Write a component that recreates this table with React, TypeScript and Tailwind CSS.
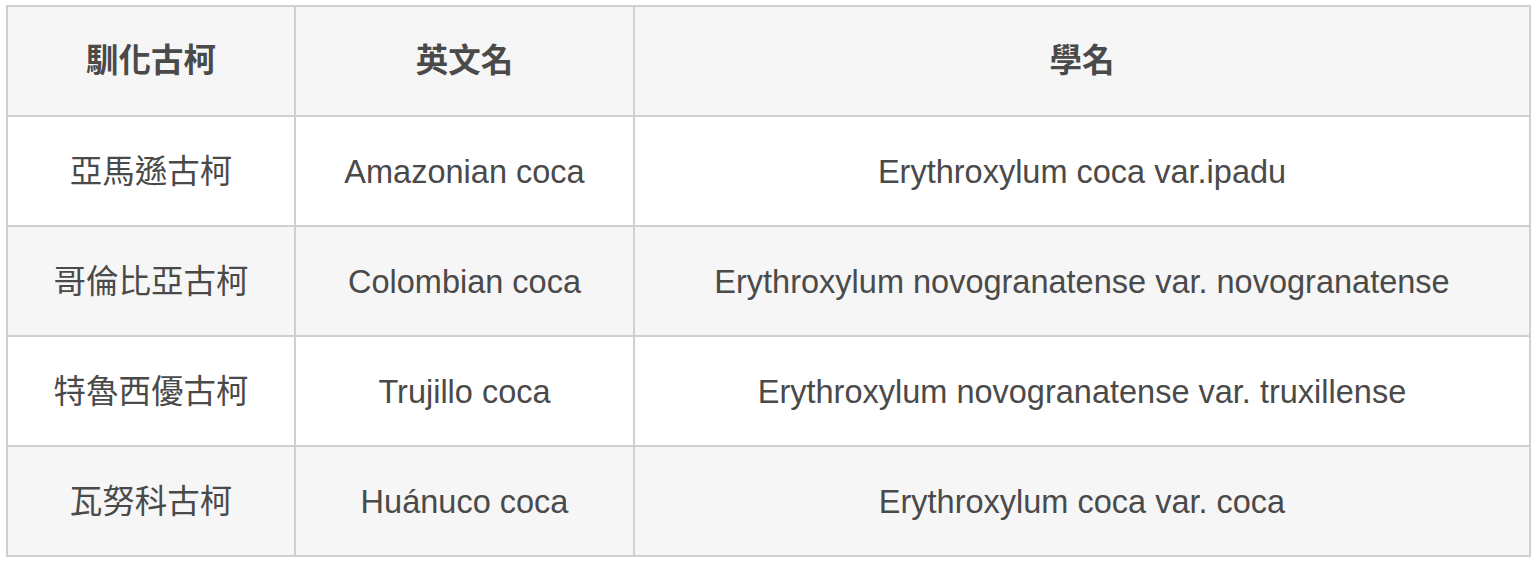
const HEAD = ['馴化古柯', '英文名', '學名']

const ROWS: [string, string, string][] = [
  ['亞馬遜古柯', 'Amazonian coca', 'Erythroxylum coca var.ipadu'],
  ['哥倫比亞古柯', 'Colombian coca', 'Erythroxylum novogranatense var. novogranatense'],
  ['特魯西優古柯', 'Trujillo coca', 'Erythroxylum novogranatense var. truxillense'],
  ['瓦努科古柯', 'Huánuco coca', 'Erythroxylum coca var. coca'],
]

const cell =
  'h-[110px] flex items-center justify-center border-r-2 border-b-2 border-[#d0d0d0] text-[32.5px] text-[#4a4a4a] whitespace-nowrap'

export default function App() {
  return (
    <div
      className="pl-[6px] pt-[5px] bg-white min-h-[562px]"
      style={{ fontFamily: '"Liberation Sans", "Noto Sans CJK TC", Arial, sans-serif' }}
    >
      <div className="w-[1525px] grid grid-cols-[288px_339px_896px] border-l-2 border-t-2 border-[#d0d0d0]">
        {HEAD.map((h) => (
          <div key={h} className={`${cell} bg-[#f6f6f6] font-bold`}>
            {h}
          </div>
        ))}
        {ROWS.map((row, i) =>
          row.map((txt, j) => (
            <div key={`${i}-${j}`} className={`${cell} pt-[2px] ${i % 2 === 1 ? 'bg-[#f6f6f6]' : 'bg-white'}`}>
              {txt}
            </div>
          ))
        )}
      </div>
    </div>
  )
}
